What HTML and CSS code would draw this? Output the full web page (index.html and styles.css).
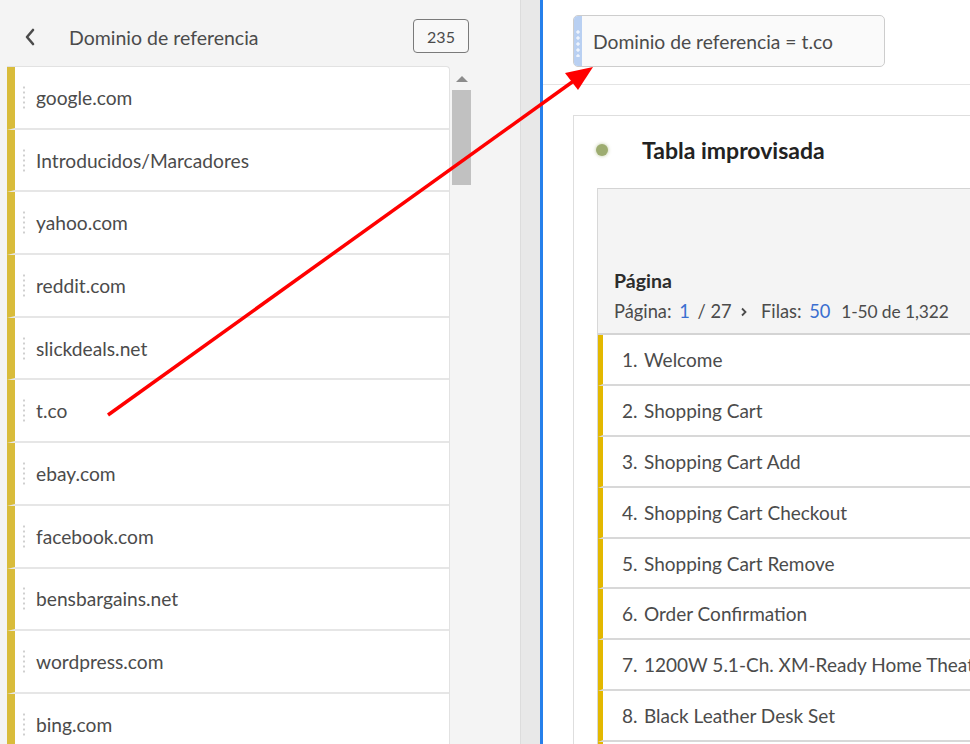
FILE: index.html
```html
<!DOCTYPE html>
<html lang="es">
<head>
<meta charset="utf-8">
<title>Dominio de referencia</title>
<link rel="stylesheet" href="styles.css">
</head>
<body>
<div class="app">
  <aside class="left">
    <header class="left-head">
      <svg class="back" width="12" height="18" viewBox="0 0 12 18"><path d="M9 2 L3 9 L9 16" fill="none" stroke="#4b4b4b" stroke-width="2.6" stroke-linecap="round" stroke-linejoin="round"/></svg>
      <span class="left-title">Dominio de referencia</span>
      <span class="count">235</span>
    </header>
    <div class="list-wrap">
      <ul class="list">
        <li class="item"><span class="grip"></span>google.com</li>
        <li class="item"><span class="grip"></span>Introducidos/Marcadores</li>
        <li class="item"><span class="grip"></span>yahoo.com</li>
        <li class="item"><span class="grip"></span>reddit.com</li>
        <li class="item"><span class="grip"></span>slickdeals.net</li>
        <li class="item"><span class="grip"></span>t.co</li>
        <li class="item"><span class="grip"></span>ebay.com</li>
        <li class="item"><span class="grip"></span>facebook.com</li>
        <li class="item"><span class="grip"></span>bensbargains.net</li>
        <li class="item"><span class="grip"></span>wordpress.com</li>
        <li class="item"><span class="grip"></span>bing.com</li>
      </ul>
      <div class="scroll">
        <span class="scroll-up"></span>
        <span class="scroll-thumb"></span>
      </div>
    </div>
  </aside>
  <div class="gutter"></div>
  <main class="main">
    <div class="filters">
      <div class="pill"><span class="pill-handle"><span class="pill-dots"></span></span><span class="pill-text">Dominio de referencia = t.co</span></div>
    </div>
    <div class="panel-area">
      <section class="card">
        <div class="card-head"><span class="dot"></span><h2 class="card-title">Tabla improvisada</h2></div>
        <div class="table">
          <div class="thead">
            <div class="th-title">Página</div>
            <div class="pager">Página: <span class="blue">1</span> / 27 <svg class="chev" width="8" height="10" viewBox="0 0 8 10"><path d="M2 1.5 L5.5 5 L2 8.5" fill="none" stroke="#4b4b4b" stroke-width="1.8"/></svg> Filas: <span class="blue">50</span> <span class="range">1-50 de 1,322</span></div>
          </div>
          <div class="row"><span class="num">1.</span>Welcome</div>
          <div class="row"><span class="num">2.</span>Shopping Cart</div>
          <div class="row"><span class="num">3.</span>Shopping Cart Add</div>
          <div class="row"><span class="num">4.</span>Shopping Cart Checkout</div>
          <div class="row"><span class="num">5.</span>Shopping Cart Remove</div>
          <div class="row"><span class="num">6.</span>Order Confirmation</div>
          <div class="row"><span class="num">7.</span>1200W 5.1-Ch. XM-Ready Home Theater</div>
          <div class="row"><span class="num">8.</span>Black Leather Desk Set</div>
          <div class="row"></div>
        </div>
      </section>
    </div>
  </main>
  <svg class="arrow" width="970" height="744" viewBox="0 0 970 744">
    <line x1="108" y1="415" x2="575" y2="80" stroke="#ff0000" stroke-width="3.5"/>
    <polygon points="593,67 578,90 565,73" fill="#ff0000"/>
  </svg>
</div>
</body>
</html>
```
FILE: styles.css
```css
* { box-sizing: border-box; }
html, body { margin: 0; padding: 0; }
body {
  width: 970px;
  height: 744px;
  overflow: hidden;
  font-family: Lato, "Open Sans", sans-serif;
  color: #4b4b4b;
  background: #fff;
}
.app {
  position: relative;
  display: flex;
  width: 970px;
  height: 744px;
  overflow: hidden;
}
.left {
  width: 521px;
  flex: none;
  background: #f4f4f4;
  border-right: 1px solid #dcdcdc;
  display: flex;
  flex-direction: column;
}
.left-head {
  height: 66px;
  flex: none;
  display: flex;
  align-items: center;
  padding: 8px 51px 0 24px;
}
.back { flex: none; }
.left-title {
  margin-left: 33px;
  font-size: 19.5px;
  color: #4b4b4b;
  flex: 1;
}
.count {
  width: 56px;
  height: 34px;
  margin-top: -2px;
  border: 1px solid #7a7a7a;
  border-radius: 4px;
  background: #f8f8f8;
  display: flex;
  align-items: center;
  justify-content: center;
  font-size: 16px;
  color: #4b4b4b;
}
.list-wrap {
  display: flex;
  flex: 1;
  padding-left: 7px;
  min-height: 0;
}
.list {
  list-style: none;
  margin: 0;
  padding: 0;
  width: 443px;
  flex: none;
  background: #fff;
  border-top: 1px solid #e2e2e2;
  border-right: 1px solid #e2e2e2;
  border-radius: 0 4px 0 0;
}
.item {
  height: 62.7px;
  display: flex;
  align-items: center;
  border-left: 8px solid #d9bc3b;
  border-bottom: 2px solid #e6e6e6;
  padding-left: 8px;
  font-size: 19.2px;
  color: #4b4b4b;
}
.grip {
  width: 2px;
  height: 25px;
  margin-right: 11px;
  background: radial-gradient(circle, #cfcfcf 0.9px, transparent 1.3px) 0 0 / 2px 5px repeat-y;
}
.scroll {
  width: 23px;
  flex: none;
  display: flex;
  flex-direction: column;
  align-items: center;
  padding-top: 10px;
}
.scroll-up {
  width: 0;
  height: 0;
  border-left: 6px solid transparent;
  border-right: 6px solid transparent;
  border-bottom: 6px solid #8c8c8c;
}
.scroll-thumb {
  margin-top: 8px;
  width: 19px;
  height: 95px;
  background: #c1c1c1;
}
.gutter {
  width: 19px;
  flex: none;
  background: #e8e8e8;
  border-right: 3px solid #2680eb;
  box-sizing: content-box;
}
.main {
  flex: 1;
  min-width: 0;
  background: #fff;
  display: flex;
  flex-direction: column;
}
.filters {
  height: 85px;
  flex: none;
  border-bottom: 1px solid #e4e4e4;
  padding: 15px 0 0 30px;
}
.pill {
  width: 312px;
  height: 52px;
  border: 1px solid #cdcdcd;
  border-radius: 5px;
  background: #fafafa;
  display: flex;
  align-items: center;
  overflow: hidden;
}
.pill-handle {
  align-self: stretch;
  width: 8px;
  flex: none;
  background: #b9d0f2;
  display: flex;
  justify-content: center;
  padding-top: 13px;
}
.pill-dots {
  width: 4px;
  height: 28px;
  background: radial-gradient(circle, #eef4fd 1.4px, transparent 1.9px) 0 0 / 4px 6px repeat-y;
}
.pill-text {
  margin-left: 11px;
  font-size: 19.3px;
  color: #4b4b4b;
}
.panel-area {
  flex: 1;
  padding: 30px 0 0 30px;
  display: flex;
  min-height: 0;
}
.card {
  flex: 1;
  border: 1px solid #dedede;
  border-right: none;
  border-bottom: none;
  display: flex;
  flex-direction: column;
}
.card-head {
  height: 72px;
  flex: none;
  display: flex;
  align-items: center;
  padding: 0 0 4px 22px;
}
.dot {
  width: 12px;
  height: 12px;
  flex: none;
  border-radius: 50%;
  background: #9dac70;
  box-shadow: 0 0 3px 1px rgba(170, 185, 130, 0.45);
}
.card-title {
  margin: 0 0 0 34px;
  font-size: 23px;
  font-weight: 700;
  color: #222;
}
.table {
  margin-left: 23px;
  border-left: 1px solid #d8d8d8;
}
.thead {
  height: 147px;
  background: #f4f4f4;
  border-top: 1px solid #d4d4d4;
  border-bottom: 2px solid #d4d4d4;
  padding: 0 0 8px 16px;
  display: flex;
  flex-direction: column;
  justify-content: flex-end;
}
.th-title {
  font-size: 19.5px;
  font-weight: 700;
  color: #2c2c2c;
  line-height: 24px;
  margin-bottom: 5px;
}
.pager {
  font-size: 18.3px;
  line-height: 26px;
  color: #4b4b4b;
  white-space: nowrap;
}
.blue { color: #3a6fd0; margin: 0 3px; }
.chev { margin: 0 8px 3px 4px; vertical-align: middle; }
.range { margin-left: 3px; font-size: 17.4px; letter-spacing: -0.1px; }
.row {
  height: 50.9px;
  display: flex;
  align-items: center;
  border-left: 5px solid #e3b800;
  border-bottom: 2px solid #d8d8d8;
  padding-left: 19px;
  font-size: 19px;
  color: #4b4b4b;
  white-space: nowrap;
}
.num { width: 22px; flex: none; }
.arrow {
  position: absolute;
  left: 0;
  top: 0;
  pointer-events: none;
}
```
